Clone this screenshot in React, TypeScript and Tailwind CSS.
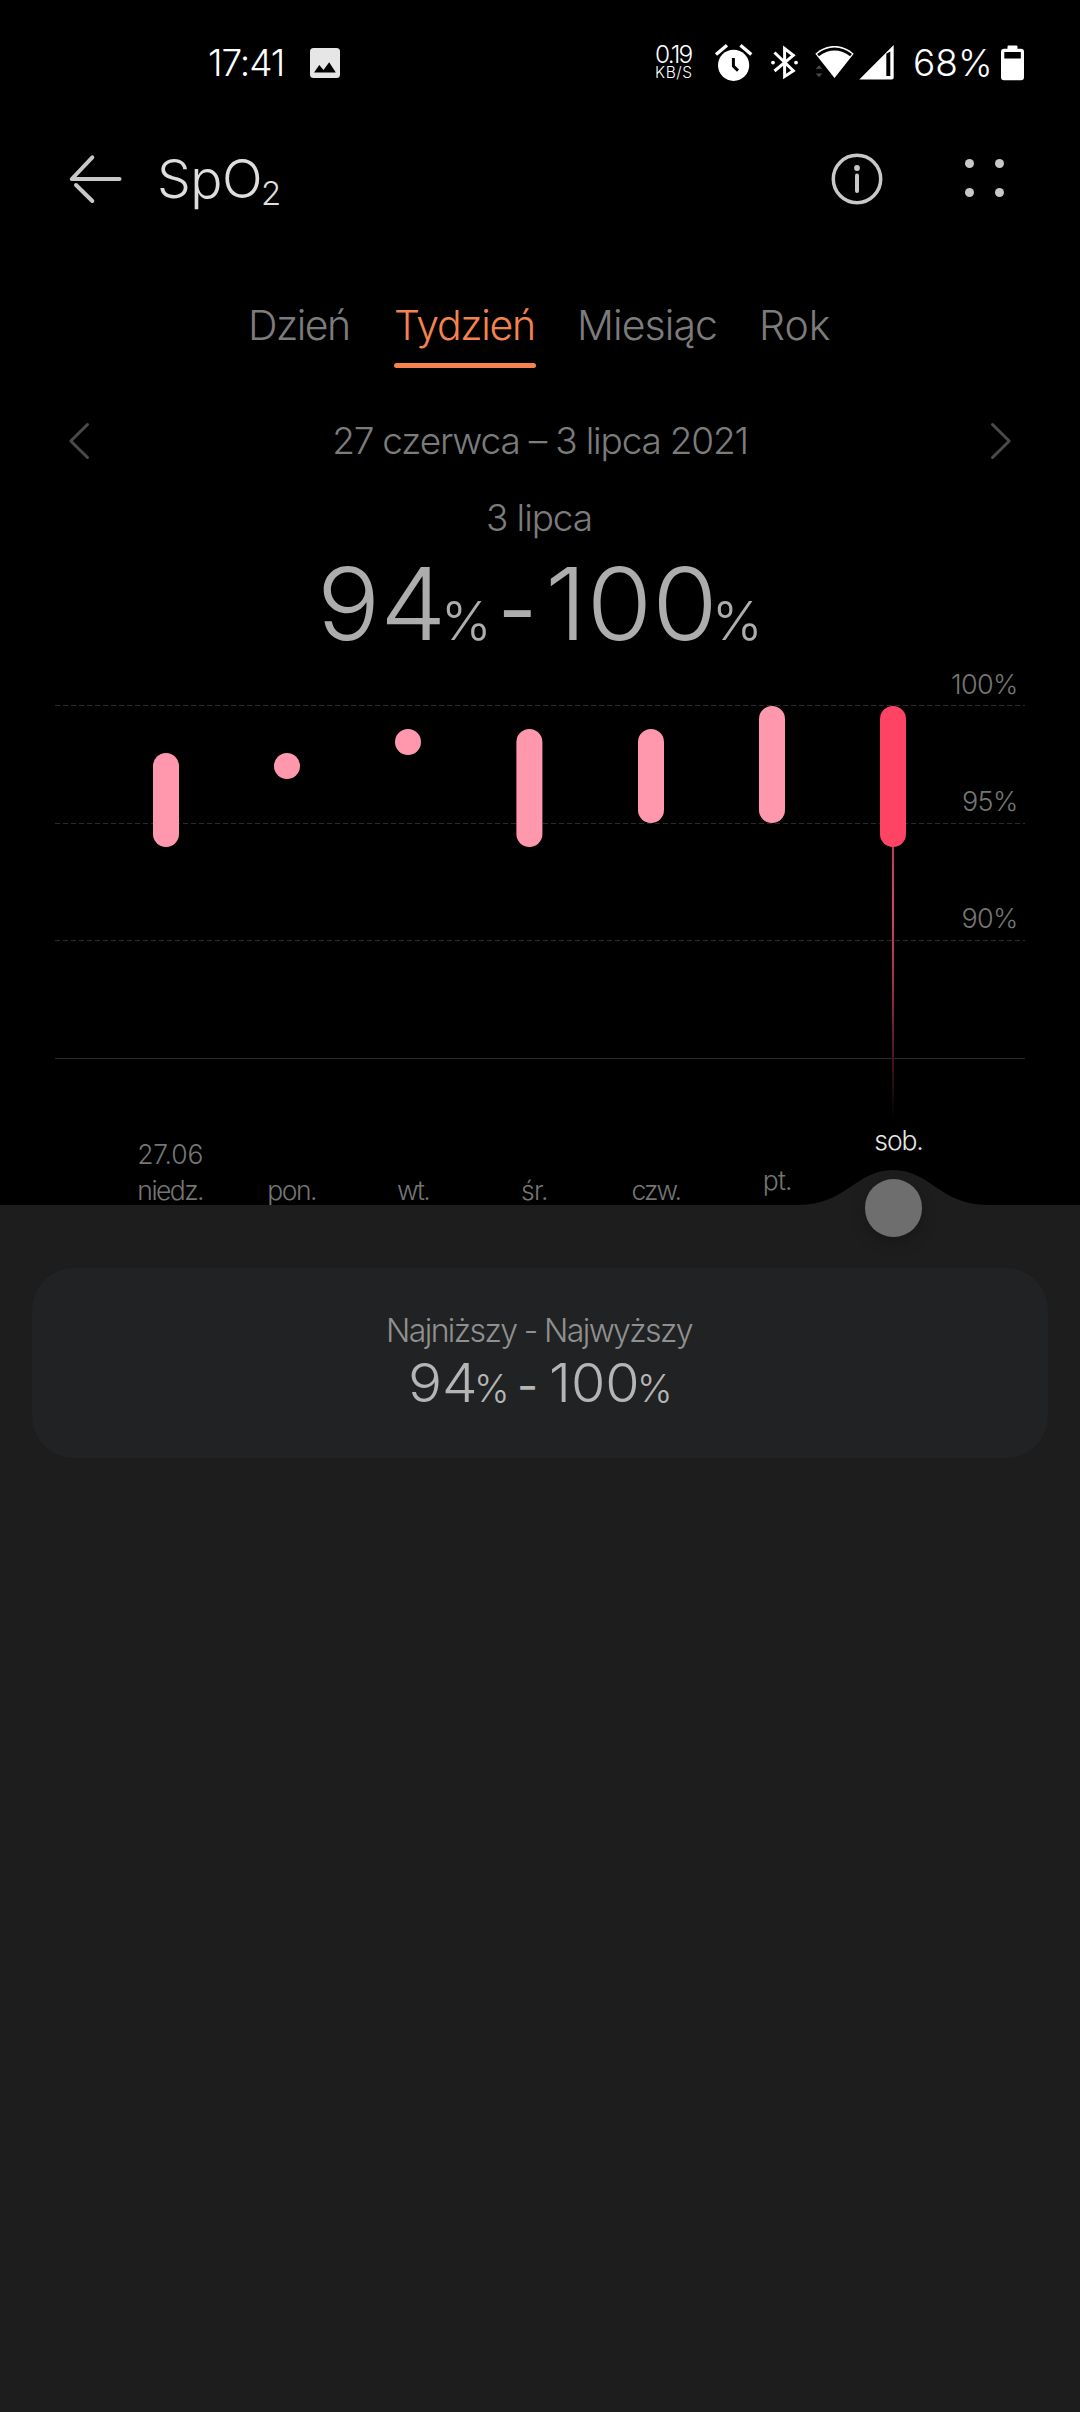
import React from "react";

type Day = { label: string; date?: string; x: number; top: number; bottom: number };

const days: Day[] = [
  { label: "niedz.", date: "27.06", x: 153, top: 753, bottom: 847 },
  { label: "pon.", x: 274, top: 753, bottom: 779 },
  { label: "wt.", x: 395, top: 729, bottom: 755 },
  { label: "śr.", x: 516.4, top: 729, bottom: 847 },
  { label: "czw.", x: 638, top: 729, bottom: 823 },
  { label: "pt.", x: 759, top: 706, bottom: 823 },
  { label: "sob.", x: 880, top: 706, bottom: 847 },
];

const labelStyles = [
  "tracking-[-1.55px] text-[#757575]",
  "tracking-[-1.5px] text-[#757575]",
  "tracking-[-1.7px] text-[#757575]",
  "tracking-[-0.8px] text-[#757575]",
  "tracking-[-1.8px] text-[#757575]",
  "mb-[10px] tracking-[-0.9px] text-[#757575]",
  "mb-[50px] tracking-[-1.1px] text-[#e6e6e6]",
];

function StatusBar() {
  return (
    <div className="flex h-[125px] items-center pl-[208px] text-[37px] leading-[60px] text-white">
      <span className="w-[102px] tracking-[-1.1px]">17:41</span>
      <svg className="h-[30px] w-[30px]" viewBox="0 0 30 30">
        <rect width="30" height="30" rx="3.5" fill="#e6e6e6" />
        <path d="M4 24.5 9.3 17l4.2 5 5.7-7.8 6.6 10.3z" fill="#000" />
      </svg>
      <div className="ml-[315px] flex w-[59px] flex-col">
        <span className="text-[24.5px] leading-[20px] tracking-[-1.8px]">0.19</span>
        <span className="pt-[1px] text-[15.5px] leading-[16px] tracking-[0.6px]">KB/S</span>
      </div>
      <svg className="h-[40px] w-[40px]" viewBox="714 43 40 40">
        <circle cx="733.6" cy="65.3" r="15.6" fill="#fff" />
        <path d="M716 54.5 727 45.3M740.5 45.3 751.3 54.5" stroke="#fff" strokeWidth="3.4" />
        <path d="M733.4 58v8.2l4.6 4.4" fill="none" stroke="#000" strokeWidth="3" />
      </svg>
      <svg className="ml-[16px] h-[40px] w-[30px]" viewBox="770 43 30 40">
        <path d="M774.5 52.5 793.3 70.8 784.6 76.5V48.5L793.3 55.3 774.5 71" fill="none" stroke="#fff" strokeWidth="3" />
        <circle cx="773" cy="62.6" r="1.9" fill="#fff" />
        <circle cx="796" cy="62.6" r="1.9" fill="#fff" />
      </svg>
      <svg className="ml-[14px] h-[40px] w-[42px]" viewBox="814 43 42 40">
        <path d="M834.5 78 815.3 53.8C826.5 43.5 842.5 43.5 853.7 53.8Z" fill="#fff" />
        <path d="M818 55.2C828 46.9 841 46.9 851 55.2" fill="none" stroke="#000" strokeWidth="3" />
        <path d="M814.8 69.3h8.4L819 64.6ZM814.8 73h8.4L819 77.7Z" fill="#4a4a4a" stroke="#000" strokeWidth="1" />
      </svg>
      <svg className="ml-[2px] h-[40px] w-[37px]" viewBox="858 43 37 40">
        <path d="M859.3 79.5 893.7 45v32.5a2 2 0 0 1-2 2Z" fill="#fff" />
        <path d="M886.3 53.8 890.3 51.5V76h-4Z" fill="#000" />
      </svg>
      <span className="ml-[18px] w-[88px]">68%</span>
      <svg className="h-[36px] w-[24px]" viewBox="1001 44.5 24 36">
        <path d="M1007.5 48.3V46a1 1 0 0 1 1-1h8a1 1 0 0 1 1 1v2.3h3.5a3 3 0 0 1 3 3v25.5a3 3 0 0 1-3 3h-17a3 3 0 0 1-3-3V51.3a3 3 0 0 1 3-3Z" fill="#fff" />
        <rect x="1004.3" y="51.5" width="16.5" height="6.5" fill="#000" />
      </svg>
    </div>
  );
}

function Header() {
  return (
    <div className="flex h-[107px] items-center pl-[69px] text-[#dedede]">
      <svg className="h-[50px] w-[54px]" viewBox="69 153.5 54 50" fill="none" stroke="#c8c8c8" strokeWidth="4" strokeLinecap="round">
        <path d="M119.5 178.5H71.8L92.3 156.8M76 184.5 92.3 200.5" strokeLinejoin="round" />
      </svg>
      <h1 className="ml-[34px] flex h-[70px] w-[674px] text-[53.5px] font-light leading-[70px] tracking-[-0.5px]">
        SpO
        <span className="-ml-[1px] pt-[14px] text-[33px]">2</span>
      </h1>
      <svg className="h-[52px] w-[52px]" viewBox="831.5 152.5 52 52">
        <circle cx="857.5" cy="178.5" r="23.7" fill="none" stroke="#c8c8c8" strokeWidth="3.5" />
        <circle cx="857.5" cy="167.5" r="2.9" fill="#c8c8c8" />
        <path d="M857.5 175v15.5" stroke="#c8c8c8" strokeWidth="4" strokeLinecap="round" />
      </svg>
      <div className="ml-[81.5px] mt-[-1px] grid grid-cols-2 gap-x-[21px] gap-y-[20px]">
        {[0, 1, 2, 3].map((dot) => (
          <span key={dot} className="size-[9px] rounded-full bg-[#c8c8c8]" />
        ))}
      </div>
    </div>
  );
}

function Tabs() {
  return (
    <div className="mt-[63px] flex h-[73px] pl-[248px] text-[41px] leading-[60px] text-[#7c7c7c]">
      <span className="w-[146px] tracking-[-1.5px]">Dzień</span>
      <div className="w-[142px]">
        <span className="block whitespace-nowrap tracking-[-1.3px] text-[#f5834f]">Tydzień</span>
        <div className="mt-[8px] h-[5px] rounded-full bg-[#f5834f]" />
      </div>
      <span className="ml-[41px] w-[182px] tracking-[-0.9px]">Miesiąc</span>
      <span>Rok</span>
    </div>
  );
}

function Chevron({ flip }: { flip?: boolean }) {
  return (
    <svg className={flip ? "h-[38px] w-[22px] rotate-180" : "h-[38px] w-[22px]"} viewBox="0 0 22 38" fill="none">
      <path d="M19.5 2.5 2.8 19 19.5 35.5" stroke="#4a4a4a" strokeWidth="3" strokeLinecap="round" strokeLinejoin="round" />
    </svg>
  );
}

function Summary() {
  return (
    <>
      <div className="mt-[42px] flex h-[61px] items-center justify-between px-[68px] text-[37px] leading-[60px] text-[#7c7c7c]">
        <Chevron />
        <span className="tracking-[-1.2px]">27 czerwca – 3 lipca 2021</span>
        <Chevron flip />
      </div>
      <div className="mt-[17px] h-[60px] pr-[2px] text-center text-[37px] leading-[60px] tracking-[-1.1px] text-[#7c7c7c]">3 lipca</div>
      <div className="mt-[5px] flex h-[100px] items-baseline whitespace-nowrap pl-[317px] text-[101px] leading-[100px] text-[#adadad]">
        <span className="w-[124px] origin-left scale-x-[1.04] font-[340]">94</span>
        <span className="w-[57px] text-[54px]">%</span>
        <span className="w-[47px] text-[84px] font-normal">-</span>
        <span className="w-[167px] origin-left scale-x-[1.05] font-[340]">100</span>
        <span className="text-[54px]">%</span>
      </div>
    </>
  );
}

function Chart() {
  return (
    <svg className="block h-[472px] w-[1080px]" viewBox="0 653 1080 472">
      <defs>
        <linearGradient id="stem" gradientUnits="userSpaceOnUse" x1="0" x2="0" y1="846" y2="1118">
          <stop offset="0" stopColor="#b83a5a" />
          <stop offset="0.22" stopColor="#dc4068" />
          <stop offset="0.5" stopColor="#a03050" />
          <stop offset="1" stopColor="#000" />
        </linearGradient>
      </defs>
      <g stroke="#2b2b2b" strokeWidth="1" shapeRendering="crispEdges">
        <path d="M55 705.5H1025M55 823.5H1025M55 940.5H1025" strokeDasharray="5 3" />
        <path d="M55 1058.5H1025" />
      </g>
      <rect x="892" y="846" width="2" height="272" fill="url(#stem)" />
      {days.map((d, i) => (
        <rect key={d.label} x={d.x} y={d.top} width="26" height={d.bottom - d.top} rx="13" fill={i === 6 ? "#ff4365" : "#ff98ad"} />
      ))}
      <g fill="#757575" fontSize="27" textAnchor="end" letterSpacing="-0.7">
        <text x="1017.500" y="693.500">100%</text>
        <text x="1017.500" y="810.500">95%</text>
        <text x="1017.500" y="927.500">90%</text>
      </g>
    </svg>
  );
}

function DayAxis() {
  return (
    <div className="flex h-[80px] items-end pl-[109.5px] text-[26.5px] leading-[36px]">
      {days.map((d, i) => (
        <div key={d.label} className="-mb-[3px] flex w-[121.4px] flex-col items-center">
          {d.date && <span className="tracking-[-0.2px] text-[#757575]">{d.date}</span>}
          <span className={labelStyles[i]}>{d.label}</span>
        </div>
      ))}
    </div>
  );
}

function DetailPanel() {
  return (
    <div className="relative h-[1207px] bg-[#1d1d1d] pt-[63px]">
      <svg className="absolute left-[793px] top-[-36px] h-[37px] w-[200px]" viewBox="793 1169 200 37">
        <path d="M798 1205C846 1205 856 1170 893 1170S940 1205 988 1205V1206H798Z" fill="#1d1d1d" />
      </svg>
      <span className="absolute left-[864.5px] top-[-26px] size-[57.5px] rounded-full bg-[#6e6e6e] shadow-[0_5px_16px_rgba(0,0,0,0.22)]" />
      <div className="relative mx-[32px] h-[190px] rounded-[42px] bg-[#212223] pt-[43px] text-[#909090]">
        <div className="pr-[2px] text-center text-[32px] leading-[40px] tracking-[-1.6px]">Najniższy - Najwyższy</div>
        <div className="mt-[2px] flex h-[60px] items-baseline whitespace-nowrap pl-[376px] text-[53.5px] leading-[60px] text-[#b5b5b5]">
          <span className="w-[66px] origin-left scale-x-[1.06] font-[330]">94</span>
          <span className="w-[43px] text-[38px]">%</span>
          <span className="w-[32px] text-[46px] font-normal">-</span>
          <span className="w-[88px] origin-left scale-x-[1.04] font-[330]">100</span>
          <span className="text-[38px]">%</span>
        </div>
      </div>
    </div>
  );
}

export default function App() {
  return (
    <div className="h-[2412px] w-[1080px] overflow-hidden bg-black font-['Inter',sans-serif] font-light">
      <StatusBar />
      <Header />
      <Tabs />
      <Summary />
      <Chart />
      <DayAxis />
      <DetailPanel />
    </div>
  );
}
